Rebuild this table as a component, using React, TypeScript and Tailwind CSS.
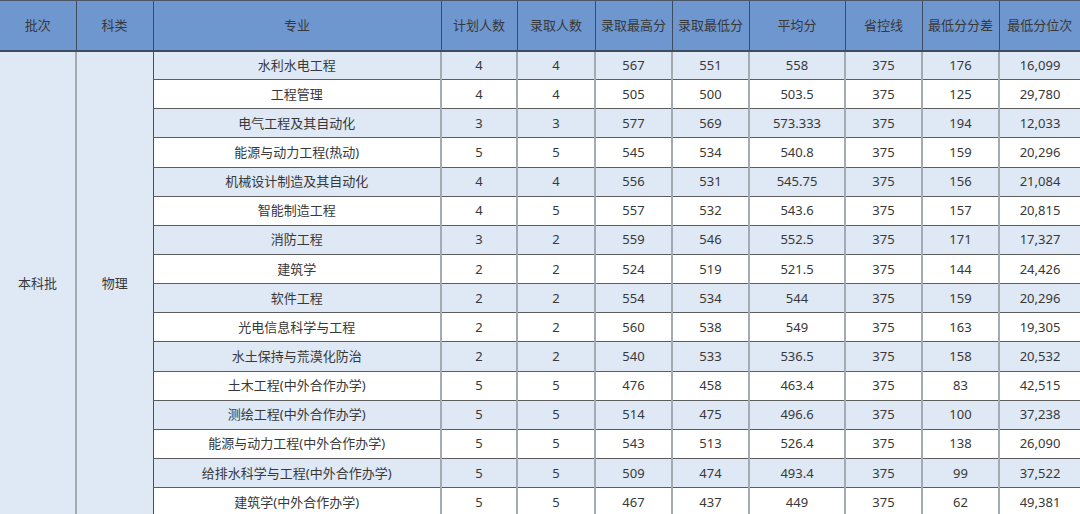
import React from 'react';

type Row = [string, number, number, number, number, string, number, number, string];

const rows: Row[] = [
    ['水利水电工程', 4, 4, 567, 551, '558', 375, 176, '16,099'],
    ['工程管理', 4, 4, 505, 500, '503.5', 375, 125, '29,780'],
    ['电气工程及其自动化', 3, 3, 577, 569, '573.333', 375, 194, '12,033'],
    ['能源与动力工程(热动)', 5, 5, 545, 534, '540.8', 375, 159, '20,296'],
    ['机械设计制造及其自动化', 4, 4, 556, 531, '545.75', 375, 156, '21,084'],
    ['智能制造工程', 4, 5, 557, 532, '543.6', 375, 157, '20,815'],
    ['消防工程', 3, 2, 559, 546, '552.5', 375, 171, '17,327'],
    ['建筑学', 2, 2, 524, 519, '521.5', 375, 144, '24,426'],
    ['软件工程', 2, 2, 554, 534, '544', 375, 159, '20,296'],
    ['光电信息科学与工程', 2, 2, 560, 538, '549', 375, 163, '19,305'],
    ['水土保持与荒漠化防治', 2, 2, 540, 533, '536.5', 375, 158, '20,532'],
    ['土木工程(中外合作办学)', 5, 5, 476, 458, '463.4', 375, 83, '42,515'],
    ['测绘工程(中外合作办学)', 5, 5, 514, 475, '496.6', 375, 100, '37,238'],
    ['能源与动力工程(中外合作办学)', 5, 5, 543, 513, '526.4', 375, 138, '26,090'],
    ['给排水科学与工程(中外合作办学)', 5, 5, 509, 474, '493.4', 375, 99, '37,522'],
    ['建筑学(中外合作办学)', 5, 5, 467, 437, '449', 375, 62, '49,381'],
];

const headers = ['批次', '科类', '专业', '计划人数', '录取人数', '录取最高分', '录取最低分', '平均分', '省控线', '最低分分差', '最低分位次'];
const widths = [76, 77, 288, 76, 78, 77, 77, 96, 77, 77, 81];

const App: React.FC = () => {
    return (
        <div className="w-[1080px] h-[514px] overflow-hidden bg-white text-[#383838] text-[13px]" style={{ fontFamily: '"Noto Sans", "Noto Sans CJK SC", sans-serif' }}>
            <table className="table-fixed border-collapse w-[1080px]">
                <colgroup>
                    {widths.map((w, i) => (
                        <col key={i} style={{ width: w }} />
                    ))}
                </colgroup>
                <thead>
                    <tr className="h-[50px] bg-[#6f97cf]">
                        {headers.map((h, i) => (
                            <th
                                key={h}
                                className={`font-normal text-center p-0 border-t border-t-[#4a5668] border-b-2 border-b-[#3f4b5e] ${i > 0 ? 'border-l border-l-[#3f4b5e]' : ''}`}
                            >
                                {h}
                            </th>
                        ))}
                    </tr>
                </thead>
                <tbody>
                    {rows.map((r, idx) => (
                        <tr key={r[0]} className={`h-[29.15px] ${idx % 2 === 0 ? 'bg-[#dfe8f5]' : 'bg-white'}`}>
                            {idx === 0 && (
                                <>
                                    <td rowSpan={16} className="bg-[#dfe8f5] text-center p-0 align-middle">本科批</td>
                                    <td rowSpan={16} className="bg-[#dfe8f5] text-center p-0 align-middle border-l-2 border-l-[#a4aab2]">物理</td>
                                </>
                            )}
                            {r.map((c, j) => (
                                <td
                                    key={j}
                                    className={`text-center p-0 leading-none border-b border-b-[#5c5c5c] ${j === 0 ? 'border-l border-l-[#4a4f57]' : 'border-l-2 border-l-[#a4aab2]'}`}
                                >
                                    {c}
                                </td>
                            ))}
                        </tr>
                    ))}
                </tbody>
            </table>
        </div>
    );
};

export default App;
